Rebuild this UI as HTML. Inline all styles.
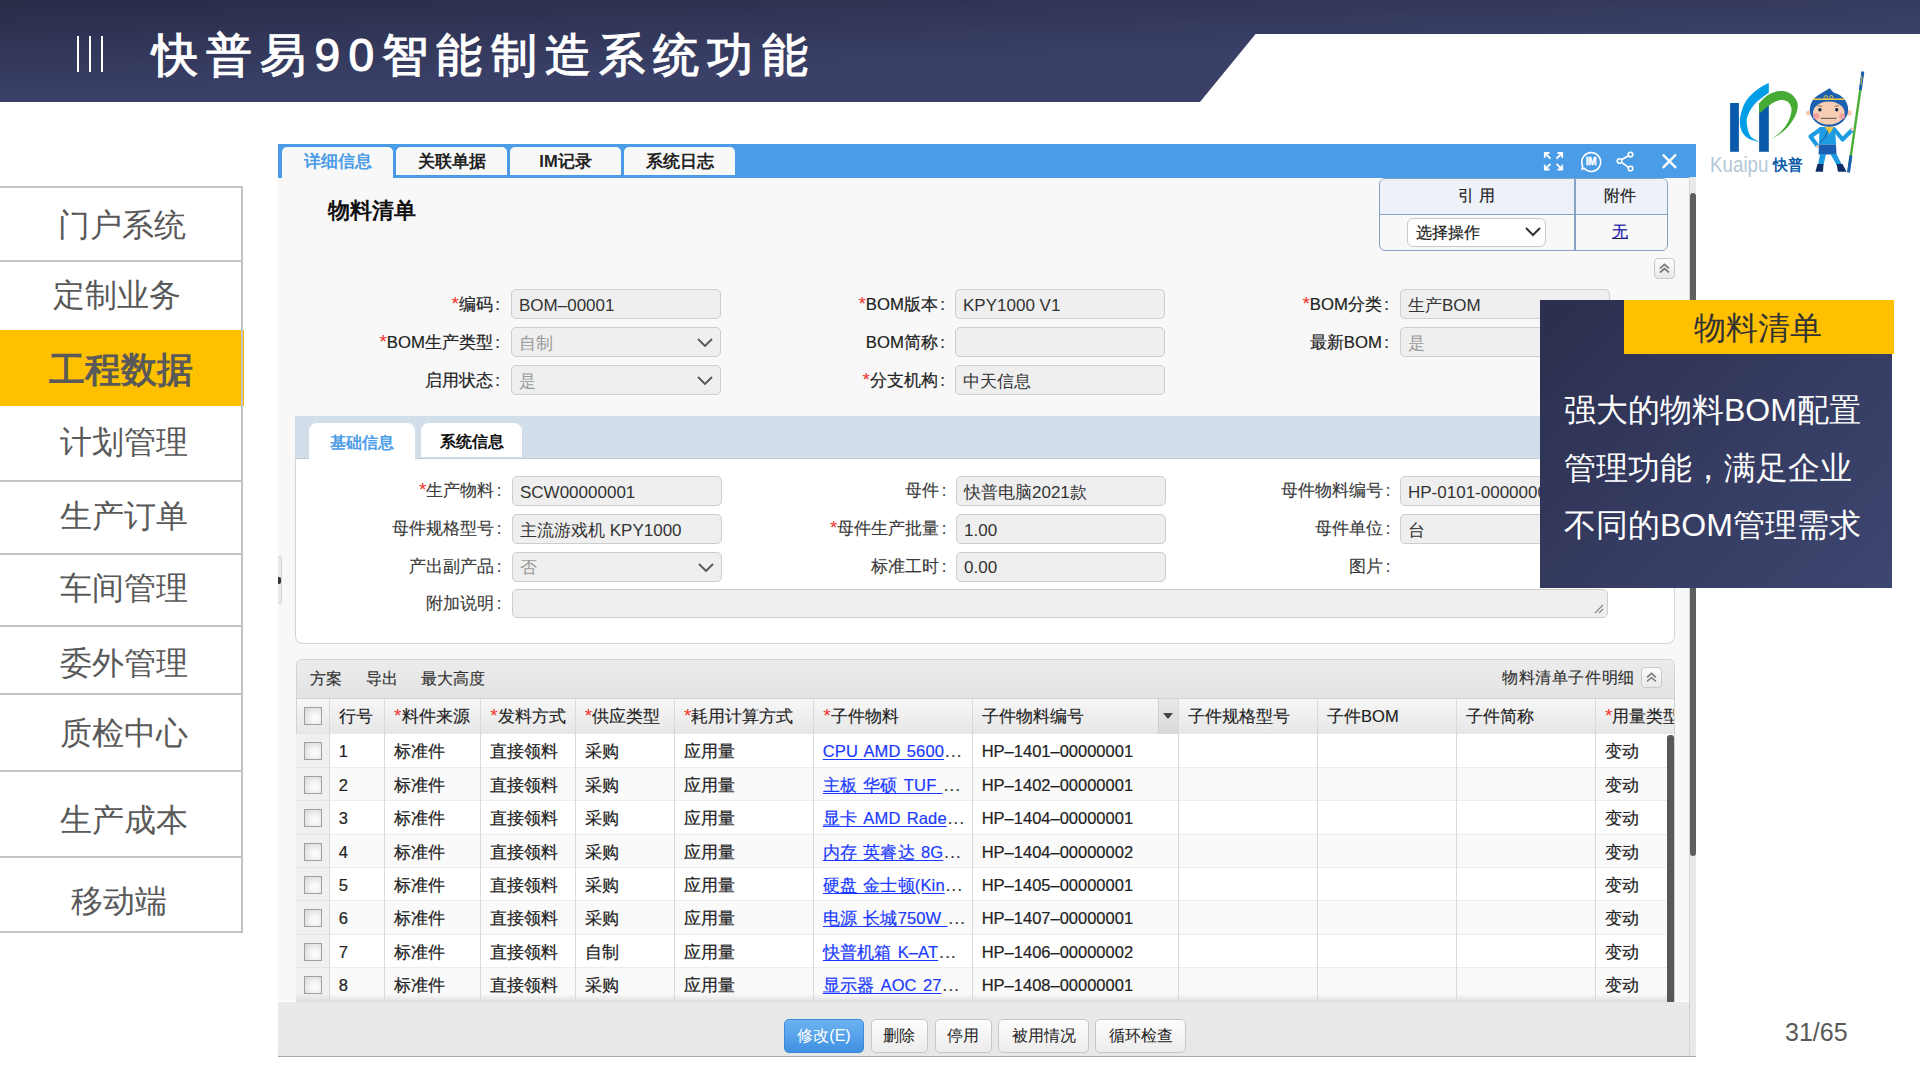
<!DOCTYPE html>
<html><head><meta charset="utf-8">
<style>
*{margin:0;padding:0;box-sizing:border-box}
html,body{width:1920px;height:1080px;overflow:hidden;background:#fff;font-family:"Liberation Sans",sans-serif}
.a{position:absolute;white-space:nowrap}
#hdr{position:absolute;left:0;top:0}
.bar{position:absolute;width:2px;background:#fff;top:36px;height:36px}
#title{left:152px;top:29px;font-size:46px;line-height:52px;color:#fff;font-weight:400;letter-spacing:8.2px;-webkit-text-stroke:1.2px #fff}
.nl{position:absolute;left:0;width:243px;height:2px;background:#c3c3c3}
.nt{position:absolute;font-size:32px;line-height:36px;color:#595959;white-space:nowrap}

.ui{font-size:16px;line-height:20px;color:#222;-webkit-text-stroke:0.2px #222}
.tab{position:absolute;top:147px;height:28px;background:#f8f8f8;border-radius:5px 5px 0 0;font-size:16.5px;line-height:28px;text-align:center;font-weight:bold;color:#222}
.tab.act{height:31px;color:#4b9ce6}
.cbtn{position:absolute;width:21px;height:21px;border:1px solid #c8c8c8;border-radius:4px;background:linear-gradient(#fdfdfd,#e9e9e9)}

.lab{font-size:16.7px;line-height:20px;color:#222;-webkit-text-stroke:0.2px #222}
.co{margin-left:2.5px}
.lab2{color:#3a3a3a;-webkit-text-stroke:0.15px #3a3a3a}
.st{color:#f0302a;-webkit-text-stroke:0;font-size:19px;line-height:0}
.inp{position:absolute;background:#efefef;border:1px solid #cdcdcd;border-radius:5px}
.inp .val,.inp .dis{position:absolute;left:7px;top:5.5px;font-size:17px;line-height:20px;color:#333;white-space:nowrap}
.inp .dis{color:#9a9a9a}
.chev{position:absolute;right:6px;top:9px}
.stab{position:absolute;top:423px;height:34px;background:#fff;border-radius:8px 8px 0 0;font-size:16px;line-height:37px;text-align:center;font-weight:bold;color:#111}
.stab.act{height:36px;line-height:40px;color:#4b9ce6}

.tt{font-size:16px;line-height:20px;color:#333;-webkit-text-stroke:0.15px #333}
.th{font-size:16.5px;line-height:20px;color:#222;-webkit-text-stroke:0.15px #222}
.td{font-size:16.5px;line-height:20px;color:#222;-webkit-text-stroke:0.2px #222}
.lk{color:#1a3aff;-webkit-text-stroke-color:#1a3aff;letter-spacing:0.15px;word-spacing:1.5px}
.el{letter-spacing:1.3px;margin-left:1px;color:#333;-webkit-text-stroke-color:#333}
.lk u{text-decoration:underline;text-underline-offset:2px}
.cb{position:absolute;width:18px;height:18px;border:1.5px solid #a0a0a0;background:radial-gradient(circle at 62% 62%,#fdfdfd 0%,#f4f4f4 35%,#d4d4d4 100%)}
.btn{position:absolute;top:1019px;height:34px;border:1px solid #c6c6c6;border-radius:5px;background:linear-gradient(#fdfdfd,#ececec);font-size:16px;line-height:32px;text-align:center;color:#222}
.btn.pri{background:linear-gradient(#6db3f1,#3f90e2);border-color:#3b87d8;color:#fff}
</style></head><body>
<svg id="hdr" width="1920" height="110">
<defs><linearGradient id="hg" gradientUnits="userSpaceOnUse" x1="0" y1="0" x2="3.8" y2="100"><stop offset="0" stop-color="#292c47"/><stop offset="1" stop-color="#3a4068"/></linearGradient></defs>
<polygon points="0,0 1920,0 1920,34 1255.6,34 1200,102 0,102" fill="url(#hg)"/>
</svg>
<div class="bar" style="left:77px"></div><div class="bar" style="left:89px"></div><div class="bar" style="left:101px"></div>
<div id="title" class="a">快普易90智能制造系统功能</div>

<!-- left nav -->
<div class="nl" style="top:186px"></div>
<div class="nl" style="top:260px"></div>
<div style="position:absolute;left:0;top:330px;width:244px;height:76px;background:#ffc000"></div>
<div class="nl" style="top:480px"></div>
<div class="nl" style="top:553px"></div>
<div class="nl" style="top:625px"></div>
<div class="nl" style="top:693px"></div>
<div class="nl" style="top:770px"></div>
<div class="nl" style="top:856px"></div>
<div class="nl" style="top:931px"></div>
<div style="position:absolute;left:241px;top:186px;width:2px;height:747px;background:#c3c3c3"></div>
<div class="nt" style="left:58px;top:207px">门户系统</div>
<div class="nt" style="left:53px;top:277px">定制业务</div>
<div class="nt" style="left:49px;top:350px;font-size:36px;line-height:40px;font-weight:bold">工程数据</div>
<div class="nt" style="left:60px;top:424px">计划管理</div>
<div class="nt" style="left:60px;top:498px">生产订单</div>
<div class="nt" style="left:60px;top:570px">车间管理</div>
<div class="nt" style="left:60px;top:645px">委外管理</div>
<div class="nt" style="left:60px;top:715px">质检中心</div>
<div class="nt" style="left:60px;top:802px">生产成本</div>
<div class="nt" style="left:71px;top:883px">移动端</div>


<!-- ===== app window ===== -->
<div style="position:absolute;left:278px;top:177px;width:1411px;height:824px;background:#f8f8f8"></div>
<div style="position:absolute;left:278px;top:144px;width:1418px;height:34px;background:#4b9ce6"></div>
<div class="tab act" style="left:282px;width:111px">详细信息</div>
<div class="tab" style="left:396px;width:111px">关联单据</div>
<div class="tab" style="left:510px;width:111px">IM记录</div>
<div class="tab" style="left:624px;width:111px">系统日志</div>
<!-- icons -->
<svg class="a" style="left:1540px;top:148px" width="145" height="28" viewBox="0 0 145 28">
 <g stroke="#fff" stroke-width="1.8" fill="none" stroke-linecap="butt">
  <path d="M4.8 5 L10.5 10.7 M4 5 h5.5 M4.8 4.3 v5.5"/>
  <path d="M22.2 5 L16.5 10.7 M23 5 h-5.5 M22.2 4.3 v5.5"/>
  <path d="M4.8 21.5 L10.5 15.8 M4 21.5 h5.5 M4.8 22.2 v-5.5"/>
  <path d="M22.2 21.5 L16.5 15.8 M23 21.5 h-5.5 M22.2 22.2 v-5.5"/>
 </g>
 <path d="M44.2 20.3 A9.4 9.4 0 1 0 42.6 17.8 L42 21.3 Z" stroke="#fff" stroke-width="1.6" fill="none" stroke-linejoin="round"/>
 <text x="51" y="17.4" font-size="10" font-weight="bold" fill="#fff" stroke="#fff" stroke-width="0.4" text-anchor="middle" font-family="Liberation Sans" letter-spacing="-0.3">IM</text>
 <g stroke="#fff" stroke-width="1.6" fill="none">
  <circle cx="90.5" cy="6.5" r="2.3"/><circle cx="79.5" cy="13" r="2.3"/><circle cx="90.5" cy="20.5" r="2.3"/>
  <path d="M88.5 7.7 L81.5 11.8 M81.5 14.3 L88.5 19.3"/>
 </g>
 <g stroke="#fff" stroke-width="2.4" fill="none">
  <path d="M122.8 6.5 L136 19.8 M136 6.5 L122.8 19.8"/>
 </g>
</svg>
<div class="a" style="left:328px;top:198px;font-size:22px;line-height:26px;font-weight:bold;color:#111">物料清单</div>
<!-- reference table -->
<div style="position:absolute;left:1379px;top:178px;width:289px;height:73px;border:1.5px solid #86a2c4;border-radius:6px;background:#f8f8f8;overflow:hidden">
 <div style="position:absolute;left:0;top:0;width:100%;height:36px;background:#eef2f8;border-bottom:1.5px solid #86a2c4"></div>
 <div style="position:absolute;left:194px;top:0;width:1.5px;height:100%;background:#86a2c4"></div>
</div>
<div class="a ui" style="left:1458px;top:186px;letter-spacing:5px">引用</div>
<div class="a ui" style="left:1604px;top:186px">附件</div>
<div style="position:absolute;left:1407px;top:218px;width:139px;height:29px;background:#fff;border:1px solid #c9c9c9;border-radius:6px"></div>
<div class="a ui" style="left:1416px;top:223px">选择操作</div>
<svg class="a" style="left:1524px;top:226px" width="18" height="12"><path d="M2 2 L9 9 L16 2" stroke="#333" stroke-width="2" fill="none"/></svg>
<div class="a ui" style="left:1612px;top:222px;color:#1a1aee;text-decoration:underline">无</div>
<!-- collapse -->
<div class="cbtn" style="left:1654px;top:258px"><svg width="19" height="19" style="position:absolute;left:0;top:0"><path d="M5 9.3 L9.5 5.3 L14 9.3 M5 13.5 L9.5 9.5 L14 13.5" stroke="#7a7a7a" stroke-width="1.7" fill="none"/></svg></div>

<!-- form -->
<div class="a lab" style="left:200px;top:295px;width:300px;text-align:right"><span class="st">*</span>编码<span class="co">:</span></div>
<div class="inp" style="left:511px;top:289px;width:210px;height:30px"><span class="val">BOM–00001</span></div>
<div class="a lab" style="left:645px;top:295px;width:300px;text-align:right"><span class="st">*</span>BOM版本<span class="co">:</span></div>
<div class="inp" style="left:955px;top:289px;width:210px;height:30px"><span class="val">KPY1000 V1</span></div>
<div class="a lab" style="left:1089px;top:295px;width:300px;text-align:right"><span class="st">*</span>BOM分类<span class="co">:</span></div>
<div class="inp" style="left:1400px;top:289px;width:210px;height:30px"><span class="val">生产BOM</span></div>
<div class="a lab" style="left:200px;top:333px;width:300px;text-align:right"><span class="st">*</span>BOM生产类型<span class="co">:</span></div>
<div class="inp" style="left:511px;top:327px;width:210px;height:30px"><span class="dis">自制</span><svg class="chev" width="18" height="12"><path d="M2 2 L9 9 L16 2" stroke="#555" stroke-width="1.8" fill="none"/></svg></div>
<div class="a lab" style="left:645px;top:333px;width:300px;text-align:right">BOM简称<span class="co">:</span></div>
<div class="inp" style="left:955px;top:327px;width:210px;height:30px"></div>
<div class="a lab" style="left:1089px;top:333px;width:300px;text-align:right">最新BOM<span class="co">:</span></div>
<div class="inp" style="left:1400px;top:327px;width:210px;height:30px"><span class="dis">是</span></div>
<div class="a lab" style="left:200px;top:371px;width:300px;text-align:right">启用状态<span class="co">:</span></div>
<div class="inp" style="left:511px;top:365px;width:210px;height:30px"><span class="dis">是</span><svg class="chev" width="18" height="12"><path d="M2 2 L9 9 L16 2" stroke="#555" stroke-width="1.8" fill="none"/></svg></div>
<div class="a lab" style="left:645px;top:371px;width:300px;text-align:right"><span class="st">*</span>分支机构<span class="co">:</span></div>
<div class="inp" style="left:955px;top:365px;width:210px;height:30px"><span class="val">中天信息</span></div>

<div style="position:absolute;left:295px;top:457px;width:1380px;height:187px;border:1.5px solid #d4d4d4;border-top:none;border-radius:0 0 8px 8px;background:#fff"></div>
<div style="position:absolute;left:295px;top:415.5px;width:1380px;height:43px;background:#d3deeb;border-bottom:1.5px solid #c6ccd4"></div>
<div class="stab act" style="left:309px;width:106px">基础信息</div>
<div class="stab" style="left:421px;width:101px">系统信息</div>
<div class="a lab lab2" style="left:201.5px;top:481.0px;width:300px;text-align:right"><span class="st">*</span>生产物料<span class="co">:</span></div>
<div class="inp" style="left:512px;top:476px;width:210px;height:30px"><span class="val">SCW00000001</span></div>
<div class="a lab lab2" style="left:646.5px;top:481.0px;width:300px;text-align:right">母件<span class="co">:</span></div>
<div class="inp" style="left:956px;top:476px;width:210px;height:30px"><span class="val">快普电脑2021款</span></div>
<div class="a lab lab2" style="left:1090.5px;top:481.0px;width:300px;text-align:right">母件物料编号<span class="co">:</span></div>
<div class="inp" style="left:1400px;top:476px;width:210px;height:30px"><span class="val">HP-0101-00000001</span></div>
<div class="a lab lab2" style="left:201.5px;top:519.0px;width:300px;text-align:right">母件规格型号<span class="co">:</span></div>
<div class="inp" style="left:512px;top:514px;width:210px;height:30px"><span class="val">主流游戏机 KPY1000</span></div>
<div class="a lab lab2" style="left:646.5px;top:519.0px;width:300px;text-align:right"><span class="st">*</span>母件生产批量<span class="co">:</span></div>
<div class="inp" style="left:956px;top:514px;width:210px;height:30px"><span class="val">1.00</span></div>
<div class="a lab lab2" style="left:1090.5px;top:519.0px;width:300px;text-align:right">母件单位<span class="co">:</span></div>
<div class="inp" style="left:1400px;top:514px;width:210px;height:30px"><span class="val">台</span></div>
<div class="a lab lab2" style="left:201.5px;top:556.5px;width:300px;text-align:right">产出副产品<span class="co">:</span></div>
<div class="inp" style="left:512px;top:551.5px;width:210px;height:30px"><span class="dis">否</span><svg class="chev" width="18" height="12"><path d="M2 2 L9 9 L16 2" stroke="#555" stroke-width="1.8" fill="none"/></svg></div>
<div class="a lab lab2" style="left:646.5px;top:556.5px;width:300px;text-align:right">标准工时<span class="co">:</span></div>
<div class="inp" style="left:956px;top:551.5px;width:210px;height:30px"><span class="val">0.00</span></div>
<div class="a lab lab2" style="left:1090.5px;top:556.5px;width:300px;text-align:right">图片<span class="co">:</span></div>
<div class="a lab lab2" style="left:201.5px;top:594.0px;width:300px;text-align:right">附加说明<span class="co">:</span></div>
<div class="inp" style="left:512px;top:589px;width:1096px;height:29px"><svg style="position:absolute;right:3px;bottom:3px" width="10" height="10"><path d="M1 9 L9 1 M5 9 L9 5" stroke="#888" stroke-width="1.2"/></svg></div>

<!-- table -->
<div style="position:absolute;left:295.5px;top:658.5px;width:1379px;height:343px;border:1px solid #d2d2d2;border-bottom:none;border-radius:6px 6px 0 0;background:#fff;overflow:hidden">
<div style="position:absolute;left:0;top:0;width:100%;height:39px;background:linear-gradient(#ececec,#e3e3e3);border-bottom:1px solid #d4d4d4"></div>
<div style="position:absolute;left:0;top:39px;width:100%;height:37px;background:linear-gradient(#f7f7f7,#e6e6e6);border-bottom:1px solid #cfcfcf"></div>
</div>
<div class="a tt" style="left:310px;top:669px">方案</div>
<div class="a tt" style="left:366px;top:669px">导出</div>
<div class="a tt" style="left:421px;top:669px">最大高度</div>
<div class="a tt" style="left:1502px;top:668px;letter-spacing:0.6px">物料清单子件明细</div>
<div class="cbtn" style="left:1641px;top:667px"><svg width="19" height="19" style="position:absolute;left:0;top:0"><path d="M5 9.3 L9.5 5.3 L14 9.3 M5 13.5 L9.5 9.5 L14 13.5" stroke="#7a7a7a" stroke-width="1.6" fill="none"/></svg></div>
<div style="position:absolute;left:296px;top:734.2px;width:1378px;height:33.43px;background:#fff;border-bottom:1px solid #ececec"></div>
<div style="position:absolute;left:296px;top:734.2px;width:33px;height:33.43px;background:#f0f0f0;border-bottom:1px solid #e6e6e6"></div>
<div style="position:absolute;left:296px;top:767.6px;width:1378px;height:33.43px;background:#fafafa;border-bottom:1px solid #ececec"></div>
<div style="position:absolute;left:296px;top:767.6px;width:33px;height:33.43px;background:#f0f0f0;border-bottom:1px solid #e6e6e6"></div>
<div style="position:absolute;left:296px;top:801.1px;width:1378px;height:33.43px;background:#fff;border-bottom:1px solid #ececec"></div>
<div style="position:absolute;left:296px;top:801.1px;width:33px;height:33.43px;background:#f0f0f0;border-bottom:1px solid #e6e6e6"></div>
<div style="position:absolute;left:296px;top:834.5px;width:1378px;height:33.43px;background:#fafafa;border-bottom:1px solid #ececec"></div>
<div style="position:absolute;left:296px;top:834.5px;width:33px;height:33.43px;background:#f0f0f0;border-bottom:1px solid #e6e6e6"></div>
<div style="position:absolute;left:296px;top:867.9px;width:1378px;height:33.43px;background:#fff;border-bottom:1px solid #ececec"></div>
<div style="position:absolute;left:296px;top:867.9px;width:33px;height:33.43px;background:#f0f0f0;border-bottom:1px solid #e6e6e6"></div>
<div style="position:absolute;left:296px;top:901.4px;width:1378px;height:33.43px;background:#fafafa;border-bottom:1px solid #ececec"></div>
<div style="position:absolute;left:296px;top:901.4px;width:33px;height:33.43px;background:#f0f0f0;border-bottom:1px solid #e6e6e6"></div>
<div style="position:absolute;left:296px;top:934.8px;width:1378px;height:33.43px;background:#fff;border-bottom:1px solid #ececec"></div>
<div style="position:absolute;left:296px;top:934.8px;width:33px;height:33.43px;background:#f0f0f0;border-bottom:1px solid #e6e6e6"></div>
<div style="position:absolute;left:296px;top:968.2px;width:1378px;height:33.43px;background:#fafafa;border-bottom:1px solid #ececec"></div>
<div style="position:absolute;left:296px;top:968.2px;width:33px;height:33.43px;background:#f0f0f0;border-bottom:1px solid #e6e6e6"></div>
<div style="position:absolute;left:328.7px;top:697.7px;width:1px;height:304px;background:#d9d9d9"></div>
<div style="position:absolute;left:384.1px;top:697.7px;width:1px;height:304px;background:#d9d9d9"></div>
<div style="position:absolute;left:480.3px;top:697.7px;width:1px;height:304px;background:#d9d9d9"></div>
<div style="position:absolute;left:574.8px;top:697.7px;width:1px;height:304px;background:#d9d9d9"></div>
<div style="position:absolute;left:674.0px;top:697.7px;width:1px;height:304px;background:#d9d9d9"></div>
<div style="position:absolute;left:813.3px;top:697.7px;width:1px;height:304px;background:#d9d9d9"></div>
<div style="position:absolute;left:971.7px;top:697.7px;width:1px;height:304px;background:#d9d9d9"></div>
<div style="position:absolute;left:1177.8px;top:697.7px;width:1px;height:304px;background:#d9d9d9"></div>
<div style="position:absolute;left:1317.1px;top:697.7px;width:1px;height:304px;background:#d9d9d9"></div>
<div style="position:absolute;left:1456.0px;top:697.7px;width:1px;height:304px;background:#d9d9d9"></div>
<div style="position:absolute;left:1594.9px;top:697.7px;width:1px;height:304px;background:#d9d9d9"></div>
<div style="position:absolute;left:1158.3px;top:698.5px;width:19.5px;height:35.5px;background:linear-gradient(#e9e9e9,#d9d9d9);border-left:1px solid #d0d0d0"></div>
<svg class="a" style="left:1162px;top:712px" width="12" height="8"><path d="M1 1 L11 1 L6 7 Z" fill="#444"/></svg>
<div class="a th" style="left:338.7px;top:706px">行号</div>
<div class="a th" style="left:394.1px;top:706px"><span class="st">*</span>料件来源</div>
<div class="a th" style="left:490.3px;top:706px"><span class="st">*</span>发料方式</div>
<div class="a th" style="left:584.8px;top:706px"><span class="st">*</span>供应类型</div>
<div class="a th" style="left:684.0px;top:706px"><span class="st">*</span>耗用计算方式</div>
<div class="a th" style="left:823.3px;top:706px"><span class="st">*</span>子件物料</div>
<div class="a th" style="left:981.7px;top:706px">子件物料编号</div>
<div class="a th" style="left:1187.8px;top:706px">子件规格型号</div>
<div class="a th" style="left:1327.1px;top:706px">子件BOM</div>
<div class="a th" style="left:1466.0px;top:706px">子件简称</div>
<div class="a th" style="left:1604.9px;top:706px;width:69px;overflow:hidden"><span class="st">*</span>用量类型</div>
<div class="cb" style="left:304px;top:707px"></div>
<div class="cb" style="left:304px;top:742.2px"></div>
<div class="a td" style="left:338.7px;top:741.2px">1</div>
<div class="a td" style="left:394.1px;top:741.2px">标准件</div>
<div class="a td" style="left:490.3px;top:741.2px">直接领料</div>
<div class="a td" style="left:584.8px;top:741.2px">采购</div>
<div class="a td" style="left:684.0px;top:741.2px">应用量</div>
<div class="a td lk" style="left:822.8px;top:741.2px"><u>CPU AMD 5600</u><span class="el">...</span></div>
<div class="a td" style="left:981.7px;top:741.2px">HP–1401–00000001</div>
<div class="a td" style="left:1605.4px;top:741.2px">变动</div>
<div class="cb" style="left:304px;top:775.6px"></div>
<div class="a td" style="left:338.7px;top:774.6px">2</div>
<div class="a td" style="left:394.1px;top:774.6px">标准件</div>
<div class="a td" style="left:490.3px;top:774.6px">直接领料</div>
<div class="a td" style="left:584.8px;top:774.6px">采购</div>
<div class="a td" style="left:684.0px;top:774.6px">应用量</div>
<div class="a td lk" style="left:822.8px;top:774.6px"><u>主板 华硕 TUF </u><span class="el">...</span></div>
<div class="a td" style="left:981.7px;top:774.6px">HP–1402–00000001</div>
<div class="a td" style="left:1605.4px;top:774.6px">变动</div>
<div class="cb" style="left:304px;top:809.1px"></div>
<div class="a td" style="left:338.7px;top:808.1px">3</div>
<div class="a td" style="left:394.1px;top:808.1px">标准件</div>
<div class="a td" style="left:490.3px;top:808.1px">直接领料</div>
<div class="a td" style="left:584.8px;top:808.1px">采购</div>
<div class="a td" style="left:684.0px;top:808.1px">应用量</div>
<div class="a td lk" style="left:822.8px;top:808.1px"><u>显卡 AMD Rade</u><span class="el">...</span></div>
<div class="a td" style="left:981.7px;top:808.1px">HP–1404–00000001</div>
<div class="a td" style="left:1605.4px;top:808.1px">变动</div>
<div class="cb" style="left:304px;top:842.5px"></div>
<div class="a td" style="left:338.7px;top:841.5px">4</div>
<div class="a td" style="left:394.1px;top:841.5px">标准件</div>
<div class="a td" style="left:490.3px;top:841.5px">直接领料</div>
<div class="a td" style="left:584.8px;top:841.5px">采购</div>
<div class="a td" style="left:684.0px;top:841.5px">应用量</div>
<div class="a td lk" style="left:822.8px;top:841.5px"><u>内存 英睿达 8G</u><span class="el">...</span></div>
<div class="a td" style="left:981.7px;top:841.5px">HP–1404–00000002</div>
<div class="a td" style="left:1605.4px;top:841.5px">变动</div>
<div class="cb" style="left:304px;top:875.9px"></div>
<div class="a td" style="left:338.7px;top:874.9px">5</div>
<div class="a td" style="left:394.1px;top:874.9px">标准件</div>
<div class="a td" style="left:490.3px;top:874.9px">直接领料</div>
<div class="a td" style="left:584.8px;top:874.9px">采购</div>
<div class="a td" style="left:684.0px;top:874.9px">应用量</div>
<div class="a td lk" style="left:822.8px;top:874.9px"><u>硬盘 金士顿(Kin</u><span class="el">...</span></div>
<div class="a td" style="left:981.7px;top:874.9px">HP–1405–00000001</div>
<div class="a td" style="left:1605.4px;top:874.9px">变动</div>
<div class="cb" style="left:304px;top:909.4px"></div>
<div class="a td" style="left:338.7px;top:908.4px">6</div>
<div class="a td" style="left:394.1px;top:908.4px">标准件</div>
<div class="a td" style="left:490.3px;top:908.4px">直接领料</div>
<div class="a td" style="left:584.8px;top:908.4px">采购</div>
<div class="a td" style="left:684.0px;top:908.4px">应用量</div>
<div class="a td lk" style="left:822.8px;top:908.4px"><u>电源 长城750W </u><span class="el">...</span></div>
<div class="a td" style="left:981.7px;top:908.4px">HP–1407–00000001</div>
<div class="a td" style="left:1605.4px;top:908.4px">变动</div>
<div class="cb" style="left:304px;top:942.8px"></div>
<div class="a td" style="left:338.7px;top:941.8px">7</div>
<div class="a td" style="left:394.1px;top:941.8px">标准件</div>
<div class="a td" style="left:490.3px;top:941.8px">直接领料</div>
<div class="a td" style="left:584.8px;top:941.8px">自制</div>
<div class="a td" style="left:684.0px;top:941.8px">应用量</div>
<div class="a td lk" style="left:822.8px;top:941.8px"><u>快普机箱 K–AT</u><span class="el">...</span></div>
<div class="a td" style="left:981.7px;top:941.8px">HP–1406–00000002</div>
<div class="a td" style="left:1605.4px;top:941.8px">变动</div>
<div class="cb" style="left:304px;top:976.2px"></div>
<div class="a td" style="left:338.7px;top:975.2px">8</div>
<div class="a td" style="left:394.1px;top:975.2px">标准件</div>
<div class="a td" style="left:490.3px;top:975.2px">直接领料</div>
<div class="a td" style="left:584.8px;top:975.2px">采购</div>
<div class="a td" style="left:684.0px;top:975.2px">应用量</div>
<div class="a td lk" style="left:822.8px;top:975.2px"><u>显示器 AOC 27</u><span class="el">...</span></div>
<div class="a td" style="left:981.7px;top:975.2px">HP–1408–00000001</div>
<div class="a td" style="left:1605.4px;top:975.2px">变动</div>
<div style="position:absolute;left:1667px;top:735px;width:7px;height:267px;background:#585858;border-radius:3px 3px 0 0"></div>
<div style="position:absolute;left:296px;top:994px;width:1371px;height:8px;background:linear-gradient(rgba(230,230,230,0),rgba(218,218,218,0.85))"></div>
<div style="position:absolute;left:278px;top:1002px;width:1411px;height:55px;background:linear-gradient(#e9e9e9,#e7e7e7)"></div><div style="position:absolute;left:278px;top:1055.5px;width:1418px;height:1.5px;background:#a9a9a9"></div>
<div class="btn pri" style="left:784px;width:80px">修改(E)</div>
<div class="btn" style="left:870.5px;width:57px">删除</div>
<div class="btn" style="left:934.5px;width:57px">停用</div>
<div class="btn" style="left:998px;width:91px">被用情况</div>
<div class="btn" style="left:1095px;width:91px">循环检查</div>
<div style="position:absolute;left:1689px;top:177px;width:7px;height:878.5px;background:#e9e9e9;border-left:1px solid #d4d4d4"></div>
<div style="position:absolute;left:1689.5px;top:193px;width:6.5px;height:663px;background:#5f5f5f;border-radius:3px"></div>
<div style="position:absolute;left:278px;top:556px;width:4px;height:48px;background:#eaeaea;border:1px solid #d4d4d4;border-left:none;border-radius:0 3px 3px 0"></div>
<div style="position:absolute;left:278px;top:577px;width:2.5px;height:7px;background:#333;border-radius:0 2px 2px 0"></div>

<!-- overlay -->
<div style="position:absolute;left:1540px;top:300px;width:352px;height:288px;background:linear-gradient(135deg,#2b2e4c 0%,#353b60 50%,#3d4670 100%)"></div>
<div style="position:absolute;left:1624px;top:300px;width:270px;height:54px;background:#ffc000"></div>
<div class="a" style="left:1694px;top:309px;font-size:32px;line-height:38px;color:#333">物料清单</div>
<div class="a" style="left:1564px;top:382px;font-size:32px;line-height:57.5px;color:#fff;white-space:normal;width:320px">强大的物料BOM配置<br>管理功能，满足企业<br>不同的BOM管理需求</div>
<!-- logo -->
<svg class="a" style="left:1700px;top:60px" width="200" height="130" viewBox="0 0 200 130">
 <rect x="30.1" y="43" width="8.8" height="48.8" fill="#0a5aab"/>
 <path d="M68.80 22.90 L67.61 23.52 L65.98 24.33 L64.04 25.31 L61.93 26.46 L59.81 27.76 L57.80 29.20 L55.81 30.79 L53.71 32.55 L51.58 34.46 L49.53 36.51 L47.63 38.70 L46.00 41.00 L44.59 43.52 L43.33 46.30 L42.24 49.20 L41.32 52.11 L40.60 54.92 L40.10 57.50 L39.83 59.88 L39.79 62.16 L39.94 64.34 L40.26 66.39 L40.72 68.32 L41.30 70.10 L42.00 71.73 L42.85 73.23 L43.84 74.59 L44.96 75.84 L46.22 76.97 L47.60 78.00 L49.29 78.93 L51.33 79.74 L53.49 80.44 L55.57 81.04 L57.35 81.52 L58.60 81.90 L58.60 81.50 L57.69 81.00 L56.39 80.37 L54.87 79.59 L53.30 78.67 L51.85 77.60 L50.70 76.40 L49.82 75.00 L49.06 73.38 L48.43 71.62 L47.91 69.80 L47.51 67.96 L47.20 66.20 L46.96 64.52 L46.77 62.86 L46.69 61.20 L46.77 59.51 L47.06 57.75 L47.60 55.90 L48.41 53.91 L49.44 51.80 L50.69 49.62 L52.11 47.44 L53.69 45.31 L55.40 43.30 L57.46 41.29 L59.95 39.23 L62.59 37.21 L65.12 35.37 L67.28 33.83 L68.80 32.70 Z" fill="#009ee6"/>
 <rect x="59.1" y="43.3" width="9.7" height="48.5" fill="#0a5aab"/>
 <path d="M59.10 43.30 L59.98 42.40 L61.21 41.12 L62.66 39.62 L64.21 38.08 L65.77 36.65 L67.20 35.50 L68.53 34.62 L69.85 33.89 L71.16 33.26 L72.47 32.74 L73.79 32.29 L75.10 31.90 L76.42 31.56 L77.73 31.29 L79.05 31.10 L80.37 31.00 L81.68 30.99 L83.00 31.10 L84.34 31.31 L85.71 31.61 L87.08 32.01 L88.41 32.51 L89.70 33.14 L90.90 33.90 L92.06 34.83 L93.20 35.95 L94.29 37.18 L95.29 38.47 L96.13 39.77 L96.80 41.00 L97.27 42.17 L97.58 43.31 L97.74 44.46 L97.79 45.62 L97.73 46.83 L97.60 48.10 L97.38 49.44 L97.06 50.82 L96.64 52.25 L96.13 53.71 L95.51 55.20 L94.80 56.70 L93.98 58.25 L93.05 59.86 L92.02 61.49 L90.91 63.12 L89.73 64.70 L88.50 66.20 L87.20 67.64 L85.80 69.04 L84.34 70.40 L82.84 71.70 L81.32 72.94 L79.80 74.10 L78.17 75.22 L76.37 76.31 L74.56 77.34 L72.86 78.26 L71.43 79.03 L70.40 79.60 L70.40 79.60 L71.37 78.92 L72.74 78.00 L74.36 76.89 L76.06 75.69 L77.69 74.47 L79.10 73.30 L80.32 72.16 L81.47 70.99 L82.55 69.80 L83.57 68.60 L84.52 67.39 L85.40 66.20 L86.21 65.02 L86.95 63.83 L87.62 62.65 L88.23 61.47 L88.79 60.28 L89.30 59.10 L89.77 57.90 L90.20 56.67 L90.57 55.45 L90.88 54.25 L91.13 53.09 L91.30 52.00 L91.40 50.98 L91.45 50.02 L91.43 49.10 L91.33 48.21 L91.16 47.35 L90.90 46.50 L90.56 45.64 L90.16 44.77 L89.67 43.92 L89.10 43.12 L88.45 42.41 L87.70 41.80 L86.83 41.29 L85.83 40.85 L84.74 40.49 L83.61 40.23 L82.49 40.06 L81.40 40.00 L80.35 40.07 L79.30 40.26 L78.25 40.54 L77.20 40.91 L76.15 41.34 L75.10 41.80 L74.09 42.28 L73.13 42.80 L72.16 43.37 L71.15 44.03 L70.05 44.79 L68.80 45.70 L67.27 46.88 L65.46 48.33 L63.56 49.89 L61.74 51.40 L60.19 52.69 L59.10 53.60 Z" fill="#46ab35"/>
 <text x="10" y="111.5" font-family="Liberation Sans" font-size="22.5" fill="#b3c8d6" textLength="58.5" lengthAdjust="spacingAndGlyphs">Kuaipu</text>
 <text x="73" y="110" font-family="Liberation Sans" font-size="15" font-weight="bold" fill="#0b5aa8" textLength="29.5" lengthAdjust="spacingAndGlyphs">快普</text>
 <!-- monkey -->
 <path d="M162.9 12 L148.5 112" stroke="#4caf3a" stroke-width="2.4"/>
 <path d="M162.9 11.5 L160.3 30" stroke="#1b5fb0" stroke-width="2.8"/>
 <path d="M150.9 95.5 L148.5 112.5" stroke="#1b5fb0" stroke-width="3"/>
 <path d="M161.5 16 L162 19 L161 22 L161.3 25" stroke="#e9c64a" stroke-width="0.9" fill="none"/>
 <!-- arms -->
 <path d="M121 69 L110.5 76.5 L117.5 86" stroke="#1d9be3" stroke-width="4.2" fill="none" stroke-linejoin="round"/>
 <path d="M134 69 L142.6 79.5 L152.5 69.5" stroke="#1d9be3" stroke-width="4.2" fill="none" stroke-linejoin="round"/>
 <circle cx="152.3" cy="69.3" r="1.8" fill="#f6c9ad"/>
 <circle cx="117.5" cy="86.5" r="1.6" fill="#f6c9ad"/>
 <!-- body -->
 <path d="M119.5 67 L135 67 L136 84.5 L119 84.5 Z" fill="#1d9be3"/>
 <path d="M119 84.5 L136 84.5 L136.5 94.5 L118.5 94.5 Z" fill="#1b5fb0"/>
 <path d="M120 94 L126 94 L123.5 105 L118 105 Z M130.5 94 L136.5 94 L142 105 L136.5 105 Z" fill="#1d9be3"/>
 <path d="M117.5 104 L123.5 104 L123 111.8 L115.5 111.8 Z M136.5 104 L142.5 104 L146.5 111.8 L138 111.8 Z" fill="#0f2e63"/>
 <path d="M124.5 66.8 L134 66.8 L129.5 74 Z" fill="#e9c64a"/>
 <path d="M128 70 Q126 78 120 83" stroke="#1a2a4a" stroke-width="0.6" fill="none"/>
 <!-- head -->
 <circle cx="108.5" cy="53" r="2.6" fill="#f6c9ad"/><circle cx="149.2" cy="53" r="2.6" fill="#f6c9ad"/>
 <ellipse cx="129" cy="49.5" rx="19.2" ry="17.2" fill="#1b5fb0"/>
 <path d="M120 34 L129.6 28.2 L134 33 Z" fill="#1b5fb0"/>
 <ellipse cx="128.8" cy="53" rx="15.8" ry="11.6" fill="#f7cdb4"/>
 <path d="M113.3 39.2 L144.2 39.2" stroke="#e9c64a" stroke-width="1.6"/>
 <circle cx="125.8" cy="37.3" r="1.7" stroke="#e9c64a" stroke-width="1" fill="none"/><circle cx="131.3" cy="37.3" r="1.7" stroke="#e9c64a" stroke-width="1" fill="none"/>
 <circle cx="116.2" cy="56.3" r="3" fill="#f3a0a2"/><circle cx="142" cy="56.3" r="3" fill="#f3a0a2"/>
 <circle cx="119.9" cy="49.8" r="1.7" fill="#15274a"/><circle cx="136.7" cy="49.8" r="1.7" fill="#15274a"/>
 <path d="M117.5 45.5 L122 46.5 M139 45.5 L134.5 46.5" stroke="#333" stroke-width="0.6"/>
 <path d="M120.8 58.3 L136.8 58.3" stroke="#333" stroke-width="0.8"/>
</svg>

<!-- page num -->
<div class="a" style="left:1785px;top:1017px;font-size:25px;line-height:30px;color:#595959">31/65</div>
</body></html>
